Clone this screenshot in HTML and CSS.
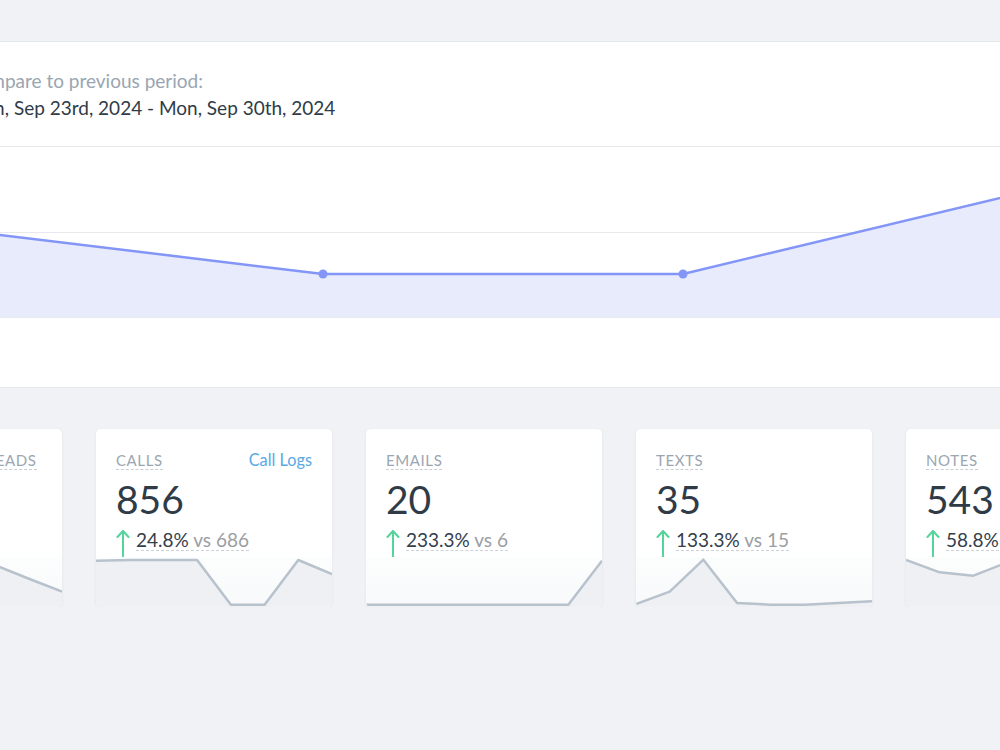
FILE: index.html
```html
<!DOCTYPE html>
<html lang="en">
<head>
<meta charset="utf-8">
<title>Activity Overview</title>
<link rel="stylesheet" href="styles.css">
</head>
<body>
<main class="report">
  <section class="panel">
    <header class="compare">
      <p class="compare-label">Compare to previous period:</p>
      <p class="compare-range">Mon, Sep 23rd, 2024 - Mon, Sep 30th, 2024</p>
    </header>
    <div class="chart">
      <svg class="chart-svg" width="1316" height="240" viewBox="0 0 1316 240">
        <line class="grid" x1="0" y1="85.5" x2="1316" y2="85.5"/>
        <line class="grid" x1="0" y1="170.5" x2="1316" y2="170.5"/>
        <polygon class="area" points="0,170 0,60 137,83.5 497,127 857,127 1217,40.7 1316,60 1316,170"/>
        <polyline class="trend" points="0,60 137,83.5 497,127 857,127 1217,40.7 1316,60"/>
        <circle class="dot" cx="137" cy="83.5" r="4.5"/>
        <circle class="dot" cx="497" cy="127" r="4.5"/>
        <circle class="dot" cx="857" cy="127" r="4.5"/>
        <circle class="dot" cx="1217" cy="40.7" r="4.5"/>
      </svg>
    </div>
  </section>

  <section class="cards">
    <article class="card">
      <div class="card-head">
        <span class="metric-label">New Contacted Leads</span>
      </div>
      <div class="metric-value">412</div>
      <div class="change">
        <svg class="arrow" width="14" height="28" viewBox="0 0 14 28"><path d="M7 28V2M1.5 8L7 2l5.5 6"/></svg>
        <span class="change-text"><b>12.5%</b> vs 366</span>
      </div>
      <svg class="spark" width="236" height="50" viewBox="0 0 236 50" preserveAspectRatio="none">
        <defs>
          <linearGradient id="sparkBg" x1="0" y1="0" x2="0" y2="1">
            <stop offset="0" stop-color="#fcfdfd"/>
            <stop offset="1" stop-color="#f8f9fa"/>
          </linearGradient>
        </defs>
        <rect class="spark-bg" width="236" height="50"/>
        <polygon class="spark-area" points="0,50 0,30 33.7,40 67.4,20 101.1,12 134.9,6 168.6,8 202.3,21.5 236,34.5 236,50"/>
        <polyline class="spark-line" points="0,30 33.7,40 67.4,20 101.1,12 134.9,6 168.6,8 202.3,21.5 236,34.5"/>
      </svg>
    </article>

    <article class="card">
      <div class="card-head">
        <span class="metric-label">Calls</span>
        <a class="card-link" href="#">Call Logs</a>
      </div>
      <div class="metric-value">856</div>
      <div class="change">
        <svg class="arrow" width="14" height="28" viewBox="0 0 14 28"><path d="M7 28V2M1.5 8L7 2l5.5 6"/></svg>
        <span class="change-text"><b>24.8%</b> vs 686</span>
      </div>
      <svg class="spark" width="236" height="50" viewBox="0 0 236 50" preserveAspectRatio="none">
        <rect class="spark-bg" width="236" height="50"/>
        <polygon class="spark-area" points="0,50 0,3.7 33.7,3 67.4,3 101.1,3 134.9,47.7 168.6,47.7 202.3,3 236,17 236,50"/>
        <polyline class="spark-line" points="0,3.7 33.7,3 67.4,3 101.1,3 134.9,47.7 168.6,47.7 202.3,3 236,17"/>
      </svg>
    </article>

    <article class="card">
      <div class="card-head">
        <span class="metric-label">Emails</span>
      </div>
      <div class="metric-value">20</div>
      <div class="change">
        <svg class="arrow" width="14" height="28" viewBox="0 0 14 28"><path d="M7 28V2M1.5 8L7 2l5.5 6"/></svg>
        <span class="change-text"><b>233.3%</b> vs 6</span>
      </div>
      <svg class="spark" width="236" height="50" viewBox="0 0 236 50" preserveAspectRatio="none">
        <rect class="spark-bg" width="236" height="50"/>
        <polygon class="spark-area" points="0,50 0,47.7 33.7,47.7 67.4,47.7 101.1,47.7 134.9,47.7 168.6,47.7 202.3,47.7 236,3.7 236,50"/>
        <polyline class="spark-line" points="0,47.7 33.7,47.7 67.4,47.7 101.1,47.7 134.9,47.7 168.6,47.7 202.3,47.7 236,3.7"/>
      </svg>
    </article>

    <article class="card">
      <div class="card-head">
        <span class="metric-label">Texts</span>
      </div>
      <div class="metric-value">35</div>
      <div class="change">
        <svg class="arrow" width="14" height="28" viewBox="0 0 14 28"><path d="M7 28V2M1.5 8L7 2l5.5 6"/></svg>
        <span class="change-text"><b>133.3%</b> vs 15</span>
      </div>
      <svg class="spark" width="236" height="50" viewBox="0 0 236 50" preserveAspectRatio="none">
        <rect class="spark-bg" width="236" height="50"/>
        <polygon class="spark-area" points="0,50 0,47 33.7,34.7 67.4,2.7 101.1,46 134.9,47.7 168.6,47.7 202.3,46 236,44.3 236,50"/>
        <polyline class="spark-line" points="0,47 33.7,34.7 67.4,2.7 101.1,46 134.9,47.7 168.6,47.7 202.3,46 236,44.3"/>
      </svg>
    </article>

    <article class="card">
      <div class="card-head">
        <span class="metric-label">Notes</span>
      </div>
      <div class="metric-value">543</div>
      <div class="change">
        <svg class="arrow" width="14" height="28" viewBox="0 0 14 28"><path d="M7 28V2M1.5 8L7 2l5.5 6"/></svg>
        <span class="change-text"><b>58.8%</b> vs 342</span>
      </div>
      <svg class="spark" width="236" height="50" viewBox="0 0 236 50" preserveAspectRatio="none">
        <rect class="spark-bg" width="236" height="50"/>
        <polygon class="spark-area" points="0,50 0,3 33.7,15.3 67.4,18.7 101.1,5.5 134.9,12 168.6,30 202.3,20 236,10 236,50"/>
        <polyline class="spark-line" points="0,3 33.7,15.3 67.4,18.7 101.1,5.5 134.9,12 168.6,30 202.3,20 236,10"/>
      </svg>
    </article>
  </section>
</main>
</body>
</html>
```

FILE: styles.css
```css
html, body {
  margin: 0;
  overflow: hidden;
}

body {
  background: #f0f2f5;
  font-family: Lato, "Open Sans", "Liberation Sans", sans-serif;
  color: #2f3b47;
}

/* The report is wider than the window and starts left of it */
.report {
  width: 1316px;
  margin-left: -174px;
  padding-top: 41px;
}

.panel {
  background: #fff;
  border-top: 1px solid #e4e7eb;
  border-bottom: 1px solid #e6e9ed;
}

.compare {
  padding: 27px 0 26px 140px;
  border-bottom: 1px solid #e6e8eb;
}

.compare p {
  margin: 0;
  font-size: 19px;
  line-height: 24px;
}

.compare-label {
  color: #9aa5b1;
  margin-bottom: 3px !important;
}

.compare-range {
  color: #2f3b47;
}

.chart-svg {
  display: block;
}

.grid {
  stroke: #e7e9ec;
  stroke-width: 1;
}

.area {
  fill: #e8ebfc;
}

.trend {
  fill: none;
  stroke: #8396f7;
  stroke-width: 2.5;
  stroke-linejoin: round;
}

.dot {
  fill: #8396f7;
}

/* Metric cards */
.cards {
  display: flex;
  gap: 34px;
  margin-top: 41px;
}

.card {
  width: 236px;
  height: 178px;
  flex: none;
  display: flex;
  flex-direction: column;
  background: #fff;
  border-radius: 5px;
  overflow: hidden;
  box-shadow: 0 1px 3px rgba(40, 55, 75, 0.08);
}

.card-head {
  display: flex;
  justify-content: space-between;
  align-items: flex-start;
  padding: 22px 20px 0;
}

.metric-label {
  font-size: 15px;
  line-height: 18px;
  letter-spacing: 0.6px;
  text-transform: uppercase;
  color: #9aa6b2;
  white-space: nowrap;
  border-bottom: 1px dashed #c6cdd5;
}

.card-link {
  font-size: 16.3px;
  line-height: 18px;
  color: #5aa9e4;
  text-decoration: none;
}

.metric-value {
  margin-top: 9px;
  padding: 0 20px;
  font-size: 39px;
  line-height: 41px;
  color: #2f3b47;
}

.change {
  display: flex;
  align-items: flex-start;
  margin-top: 9px;
  padding: 0 20px;
  height: 28px;
}

.arrow {
  display: block;
  flex: none;
  margin-right: 6px;
}

.arrow path {
  fill: none;
  stroke: #52d49a;
  stroke-width: 2;
  stroke-linecap: round;
  stroke-linejoin: round;
}

.change-text {
  margin-top: 0;
  font-size: 19px;
  line-height: 21px;
  color: #9b9ea3;
  white-space: nowrap;
  border-bottom: 1px dashed #ccd2d9;
}

.change-text b {
  font-weight: normal;
  color: #33404c;
}

.spark {
  display: block;
  margin-top: auto;
  flex: none;
}

.spark-bg {
  fill: url(#sparkBg);
}

.spark-area {
  fill: #eef0f3;
}

.spark-line {
  fill: none;
  stroke: #b8c2cc;
  stroke-width: 2.5;
  stroke-linejoin: round;
}
```
